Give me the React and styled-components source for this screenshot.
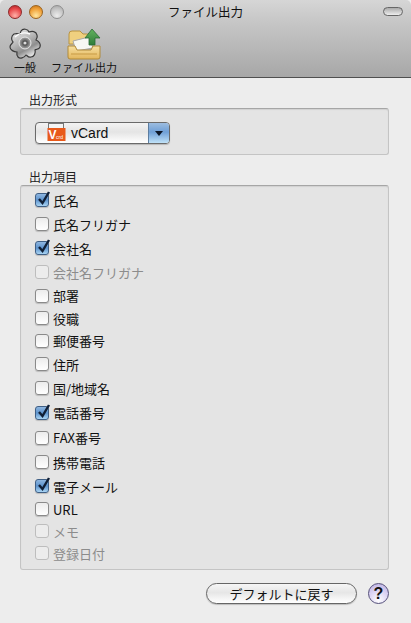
import React from "react";
import styled, { createGlobalStyle, css } from "styled-components";

const GlobalStyle = createGlobalStyle`
    html, body {
        margin: 0;
        padding: 0;
        background: #ededed;
    }
    body {
        font-family: "Noto Sans CJK JP", "Liberation Sans", sans-serif;
    }
`;

const Window = styled.div`
    width: 411px;
    height: 623px;
    display: flex;
    flex-direction: column;
    background: #ededed;
    overflow: hidden;
`;

const TitleArea = styled.header`
    height: 78px;
    box-sizing: border-box;
    flex: none;
    display: flex;
    flex-direction: column;
    background: linear-gradient(#d6d6d6, #c8c8c8 25%, #a7a7a7);
    border-bottom: 1px solid #4f4f4f;
    border-radius: 5px 5px 0 0;
`;

const TitleBar = styled.div`
    height: 23px;
    flex: none;
    padding: 0 8px;
    display: grid;
    grid-template-columns: 1fr auto 1fr;
    align-items: center;
`;

const Lights = styled.div`
    display: flex;
    gap: 7px;
`;

const Light = styled.span`
    width: 14px;
    height: 14px;
    border-radius: 50%;
    box-sizing: border-box;
    border: 1px solid ${(p) => p.$edge};
    background: radial-gradient(circle at 50% 80%, ${(p) => p.$glow}, ${(p) => p.$base} 60%, ${(p) => p.$top});
`;

const WindowTitle = styled.div`
    font-size: 12.5px;
    line-height: 23px;
    color: #111;
`;

const Pill = styled.span`
    justify-self: end;
    width: 18px;
    height: 7px;
    border-radius: 5px;
    border: 1px solid #666;
    background: linear-gradient(#aaa, #eee);
`;

const Toolbar = styled.nav`
    display: flex;
    padding: 5px 0 0 9px;
    gap: 10px;
`;

const ToolItem = styled.div`
    display: flex;
    flex-direction: column;
    align-items: center;
    width: ${(p) => p.$w}px;
`;

const ToolIcon = styled.svg`
    height: 32px;
    width: 34px;
    display: block;
    flex: none;
`;

const ToolLabel = styled.span`
    font-size: 11px;
    line-height: 14px;
    color: #111;
    white-space: nowrap;
`;

const Content = styled.main`
    flex: 1;
    display: flex;
    flex-direction: column;
    padding: 14px 22px 0 20px;
`;

const GroupLabel = styled.div`
    font-size: 12px;
    line-height: 16px;
    color: #222;
    padding-left: 9px;
`;

const GroupBox = styled.section`
    box-sizing: border-box;
    margin-bottom: ${(p) => p.$mb || 0}px;
    height: ${(p) => p.$h}px;
    background: #e4e4e4;
    border: 1px solid #c4c4c4;
    border-top-color: #a6a6a6;
    border-radius: 3px;
    box-shadow: inset 0 1px 1px rgba(0, 0, 0, 0.08);
`;

const FormatBox = styled(GroupBox)`
    padding: 13px 14px;
`;

const Select = styled.div`
    width: 135px;
    height: 22px;
    box-sizing: border-box;
    border: 1px solid #6a6a6a;
    border-radius: 4px;
    display: flex;
    overflow: hidden;
    background: linear-gradient(#f3f3f3, #e4e4e4 45%, #fff);
    box-shadow: 0 1px 1px rgba(0, 0, 0, 0.2);
`;

const SelectValue = styled.div`
    flex: 1;
    display: flex;
    align-items: center;
    padding-left: 11px;
    gap: 4px;
    font-family: "Liberation Sans", sans-serif;
    font-size: 14px;
    color: #111;
`;

const Arrow = styled.div`
    width: 20px;
    display: flex;
    align-items: center;
    justify-content: center;
    border-left: 1px solid #5c7da0;
    background: linear-gradient(#9dbde0, #6f9fd6 45%, #c0e2f8);
`;

const ArrowHead = styled.span`
    width: 0;
    height: 0;
    border-left: 4px solid transparent;
    border-right: 4px solid transparent;
    border-top: 5px solid #0c1626;
`;

const List = styled(GroupBox)`
    padding: 2px 0 0 14px;
`;

const Row = styled.div`
    height: ${(p) => p.$h}px;
    display: flex;
    align-items: center;
    gap: 4px;
    font-size: 13px;
    color: ${(p) => (p.$off ? "#8c8c8c" : "#111")};
`;

const Box = styled.span`
    position: relative;
    width: 14px;
    height: 14px;
    box-sizing: border-box;
    flex: none;
    border-radius: 3px;
    border: 1px solid #8a8a8a;
    background: linear-gradient(#ececec, #fff);
    box-shadow: 0 1px 1px rgba(0, 0, 0, 0.18);
    ${(p) =>
        p.$on &&
        css`
            border-color: #3f5f85;
            background: linear-gradient(#8eb6e0, #5d93cd 50%, #a9d4f3);
        `}
    ${(p) =>
        p.$off &&
        css`
            border-color: #bdbdbd;
            background: #ececec;
            box-shadow: none;
        `}
`;

const Tick = styled.svg`
    position: absolute;
    left: 0;
    top: -3px;
    width: 15px;
    height: 15px;
`;

const Footer = styled.footer`
    display: flex;
    justify-content: flex-end;
    align-items: center;
    gap: 11px;
    margin-top: 13px;
`;

const Button = styled.div`
    width: 151px;
    height: 21px;
    box-sizing: border-box;
    border: 1px solid #666;
    border-radius: 11px;
    background: linear-gradient(#f6f6f6, #e6e6e6 45%, #fff);
    box-shadow: 0 1px 1px rgba(0, 0, 0, 0.2);
    display: flex;
    align-items: center;
    justify-content: center;
    font-size: 13px;
    color: #111;
`;

const Help = styled.div`
    width: 21px;
    height: 21px;
    box-sizing: border-box;
    border: 1px solid #55507a;
    border-radius: 50%;
    background: radial-gradient(circle at 50% 85%, #fff, #d9d0f2 55%, #b9aee0);
    display: flex;
    align-items: center;
    justify-content: center;
    font-family: "Liberation Sans", sans-serif;
    font-size: 16px;
    font-weight: 700;
    color: #111;
`;

// label, state, row height (the source rows are not quite evenly spaced)
const rows = [
    ["氏名", "on", 24],
    ["氏名フリガナ", "", 24],
    ["会社名", "on", 24],
    ["会社名フリガナ", "off", 24],
    ["部署", "", 23],
    ["役職", "", 22],
    ["郵便番号", "", 23],
    ["住所", "", 24],
    ["国/地域名", "", 24],
    ["電話番号", "on", 25],
    ["FAX番号", "", 25],
    ["携帯電話", "", 24],
    ["電子メール", "on", 24],
    ["URL", "", 22],
    ["メモ", "off", 22],
    ["登録日付", "off", 22],
];

const GearIcon = () => (
    <ToolIcon viewBox="0 0 34 32">
        <defs>
            <linearGradient id="gear" x1="0" y1="0" x2="0.6" y2="1">
                <stop offset="0" stopColor="#f8f8f8" />
                <stop offset="0.5" stopColor="#b4b4b4" />
                <stop offset="0.75" stopColor="#8e8e8e" />
                <stop offset="1" stopColor="#e8e8e8" />
            </linearGradient>
            <radialGradient id="hub">
                <stop offset="0" stopColor="#222" />
                <stop offset="0.35" stopColor="#555" />
                <stop offset="1" stopColor="#b0b0b0" />
            </radialGradient>
        </defs>
        <path
            d="M13 3 C15 0 20 1 21 4 C24 3 28 3 29 7 C30 10 28 11 28 12 C31 13 33 16 32 19 C31 22 28 21 27 22 C28 25 26 29 23 29 C20 30 19 27 18 27 C16 30 12 31 10 29 C8 27 9 25 9 24 C6 24 2 22 2 19 C2 16 5 15 5 14 C3 12 3 8 6 6 C9 5 11 6 12 6 Z"
            fill="url(#gear)"
            stroke="#3a3a3a"
            strokeWidth="1.2"
        />
        <path d="M7 9 C11 5 17 4 22 6" fill="none" stroke="#fff" strokeWidth="1.5" />
        <circle cx="17" cy="15" r="6" fill="url(#hub)" stroke="#e4e4e4" />
        <circle cx="17" cy="15" r="1.6" fill="#ddd" />
    </ToolIcon>
);

const ExportIcon = () => (
    <ToolIcon viewBox="0 0 34 32">
        <defs>
            <linearGradient id="tray" x1="0" y1="0" x2="0" y2="1">
                <stop offset="0" stopColor="#f7df9f" />
                <stop offset="1" stopColor="#e2b65d" />
            </linearGradient>
            <linearGradient id="arrow" x1="0" y1="0" x2="0" y2="1">
                <stop offset="0" stopColor="#63b35f" />
                <stop offset="1" stopColor="#2f7c3a" />
            </linearGradient>
        </defs>
        <path d="M2 6 Q2 3 5 3 H13 L16 6 H24 V16 H2 Z" fill="#efd07f" stroke="#b99443" />
        <path d="M6 13 L22 9 L26 20 L9 23 Z" fill="#f7f7f3" stroke="#a8a8a8" />
        <path d="M22 17 V10 H18 L25 1 L33 10 H28 V17 Z" fill="url(#arrow)" stroke="#2a6a33" strokeWidth="0.8" />
        <path d="M1 18 H8 L10 22 H24 L26 18 H33 V29 Q33 31 31 31 H3 Q1 31 1 29 Z" fill="url(#tray)" stroke="#b08a3a" />
        <path d="M4 26 H30" stroke="#c79a45" strokeWidth="1" />
    </ToolIcon>
);

const VCardIcon = () => (
    <svg width="20" height="20" viewBox="0 0 20 20">
        <rect x="1.5" y="0.5" width="15" height="8" fill="#f4f4f4" stroke="#777" />
        <rect x="0.5" y="5" width="18" height="13" fill="#e8591a" />
        <text x="1.5" y="16" fontFamily="Liberation Sans" fontSize="12" fontWeight="700" fill="#fff">V</text>
        <text x="9" y="16" fontFamily="Liberation Sans" fontSize="5" fill="#fff">crd</text>
    </svg>
);

export default function App() {
    return (
        <Window>
            <GlobalStyle />
            <TitleArea>
                <TitleBar>
                    <Lights>
                        <Light $edge="#8c2a2a" $glow="#ffb0a8" $base="#e8484a" $top="#a81f24" />
                        <Light $edge="#9a6420" $glow="#ffe6a0" $base="#f0a138" $top="#c26f14" />
                        <Light $edge="#8f8f8f" $glow="#ececec" $base="#c4c4c4" $top="#a2a2a2" />
                    </Lights>
                    <WindowTitle>ファイル出力</WindowTitle>
                    <Pill />
                </TitleBar>
                <Toolbar>
                    <ToolItem $w={32}>
                        <GearIcon />
                        <ToolLabel>一般</ToolLabel>
                    </ToolItem>
                    <ToolItem $w={66}>
                        <ExportIcon />
                        <ToolLabel>ファイル出力</ToolLabel>
                    </ToolItem>
                </Toolbar>
            </TitleArea>
            <Content>
                <GroupLabel>出力形式</GroupLabel>
                <FormatBox $h={47} $mb={14}>
                    <Select>
                        <SelectValue>
                            <VCardIcon />
                            vCard
                        </SelectValue>
                        <Arrow>
                            <ArrowHead />
                        </Arrow>
                    </Select>
                </FormatBox>
                <GroupLabel>出力項目</GroupLabel>
                <List $h={385}>
                    {rows.map(([label, state, h]) => (
                        <Row key={label} $h={h} $off={state === "off"}>
                            <Box $on={state === "on"} $off={state === "off"}>
                                {state === "on" && (
                                    <Tick viewBox="0 0 15 15">
                                        <path d="M3 8 L6.5 12 L13 1" fill="none" stroke="#101f36" strokeWidth="2.4" />
                                    </Tick>
                                )}
                            </Box>
                            {label}
                        </Row>
                    ))}
                </List>
                <Footer>
                    <Button>デフォルトに戻す</Button>
                    <Help>?</Help>
                </Footer>
            </Content>
        </Window>
    );
}
